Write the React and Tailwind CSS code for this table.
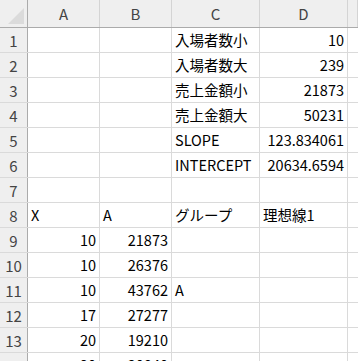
import React from "react";

const cols = ["A", "B", "C", "D", ""];
const widths = ["w-[72px]", "w-[72px]", "w-[88px]", "w-[88px]", "flex-1"];

// [A, B, C, D] per row; numbers are right-aligned
const rows = [
  [null, null, "入場者数小", 10],
  [null, null, "入場者数大", 239],
  [null, null, "売上金額小", 21873],
  [null, null, "売上金額大", 50231],
  [null, null, "SLOPE", "123.834061"],
  [null, null, "INTERCEPT", "20634.6594"],
  [null, null, null, null],
  ["X", "A", "グループ", "理想線1"],
  [10, 21873, null, null],
  [10, 26376, null, null],
  [10, 43762, "A", null],
  [17, 27277, null, null],
  [20, 19210, null, null],
  [20, 30840, null, null],
];

function Cell({ value, width }) {
  const isNum = typeof value === "number" || (typeof value === "string" && /^[\d.]+$/.test(value));
  return (
    <div
      className={`${width} h-full shrink-0 border-r border-[#dadada] flex items-center overflow-visible whitespace-nowrap px-[3px] ${
        isNum ? "justify-end" : "justify-start"
      }`}
    >
      {value !== null && value !== undefined ? String(value) : ""}
    </div>
  );
}

export default function App() {
  return (
    <div
      className="w-[358px] h-[361px] overflow-hidden bg-white text-black text-[14.5px] leading-none"
      style={{ fontFamily: '"Noto Sans CJK JP", "Noto Sans", sans-serif' }}
    >
      {/* column header */}
      <div className="flex h-[28px] bg-[#efefef] border-b border-[#ababab]">
        <div className="relative w-[28px] h-full shrink-0 border-r border-[#ababab]">
          <svg className="absolute left-[8px] top-[8px]" width="16" height="16" viewBox="0 0 16 16">
            <polygon points="0,16 16,0 16,16" fill="#dbdbdb" />
          </svg>
        </div>
        {cols.map((c, i) => (
          <div
            key={i}
            className={`${widths[i]} h-full shrink-0 border-r border-[#d4d4d4] flex items-center justify-center text-[#444] text-[15px]`}
          >
            {c}
          </div>
        ))}
      </div>
      {/* rows */}
      {rows.map((r, ri) => (
        <div key={ri} className="flex h-[25px] border-b border-[#dadada]">
          <div className="w-[28px] h-full shrink-0 bg-[#efefef] border-r border-[#ababab] flex items-center justify-center text-[#444] text-[15px]">
            {ri + 1}
          </div>
          {[0, 1, 2, 3].map((ci) => (
            <Cell key={ci} value={r[ci]} width={widths[ci]} />
          ))}
          <div className="flex-1 h-full" />
        </div>
      ))}
    </div>
  );
}
